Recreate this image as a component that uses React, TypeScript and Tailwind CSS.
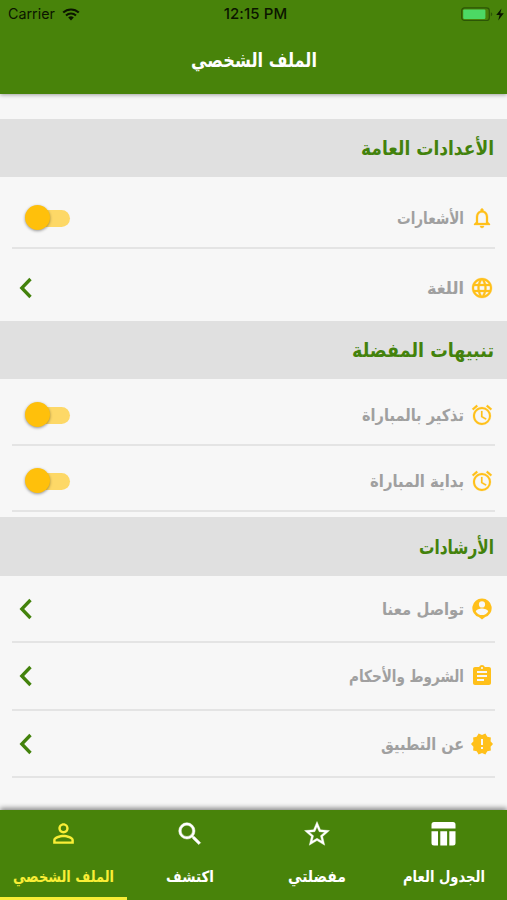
import type { ReactNode } from "react";
import {
  MdAlarm,
  MdAssignment,
  MdLanguage,
  MdNewReleases,
  MdNotificationsNone,
  MdPersonOutline,
  MdSearch,
  MdStarBorder,
} from "react-icons/md";

const WifiIcon = () => (
  <svg width="18" height="13" viewBox="0 0 18 13" fill="none">
    <path d="M1.2 4.6a11.2 11.2 0 0 1 15.6 0" stroke="#0b1500" strokeWidth="2.1" />
    <path d="M4 7.5a7.2 7.2 0 0 1 10 0" stroke="#0b1500" strokeWidth="2" />
    <path d="M9 12.4 6.2 9.6a4 4 0 0 1 5.6 0z" fill="#0b1500" />
  </svg>
);

const BatteryIcon = () => (
  <svg width="44" height="15" viewBox="0 0 44 15">
    <rect x=".7" y=".9" width="27.6" height="12.6" rx="2.8" fill="none" stroke="#2c5606" strokeWidth="1.2" />
    <rect x="2.2" y="2.4" width="22.2" height="9.6" rx="1.2" fill="#4cd964" />
    <path d="M29.8 5.2c2 .8 2 3.2 0 4z" fill="#2c5606" />
    <path d="M40.5 1.5 35.2 8h3.4l-1.4 5.5 5.6-7.200h-3.500z" fill="#0b1500" />
  </svg>
);

const PersonPinIcon = () => (
  <svg width="24" height="24" viewBox="0 0 24 24" fill="currentColor">
    <path
      fillRule="evenodd"
      d="M12 1.6a9.5 9.5 0 0 0-3.2 18.5L12 22.6l3.2-2.5A9.5 9.5 0 0 0 12 1.6zM12 4.3a3.1 3.1 0 1 1 0 6.2 3.1 3.1 0 0 1 0-6.2zM5.8 14.6c0-2.2 4.2-3.2 6.2-3.2s6.2 1 6.2 3.2a7.3 7.3 0 0 1-12.4 0z"
    />
  </svg>
);

const TableIcon = () => (
  <svg width="28" height="28" viewBox="0 0 28 28" fill="currentColor">
    <path d="M4 2h19a2.5 2.5 0 0 1 2.5 2.5V8.6h-24V4.5A2.5 2.5 0 0 1 4 2z" />
    <path d="M1.5 11.2h6.500V25.500H4A2.500 2.500 0 0 1 1.500 23zM10.300 11.200h6.800V25.500h-6.800zM19.300 11.200h6.200V23a2.500 2.500 0 0 1-2.500 2.500h-3.700z" />
  </svg>
);

const Toggle = () => (
  <div className="relative ml-[13px] h-[26px] w-[45px]">
    <div className="absolute left-1 top-[5px] h-[17px] w-[41px] rounded-full bg-[#fdd867]" />
    <div className="absolute left-0 top-0 h-[25px] w-[25px] rounded-full bg-[#ffc00b] shadow-[0_1px_3px_rgba(0,0,0,0.4)]" />
  </div>
);

const Chevron = () => (
  <svg className="ml-[7px]" width="13" height="22" viewBox="0 0 13 22" fill="none">
    <path d="M11.5 2 2.8 11l8.7 9" stroke="#43820c" strokeWidth="3.3" />
  </svg>
);

// Arabic label squeezed to the width it has in the app's own typeface
const Label = ({ text, width, className }: { text: string; width: number; className: string }) => (
  <svg className={`overflow-visible ${className}`} style={{ width }} height="40" direction="rtl">
    <text x={width} y="26" fill="currentColor" textLength={width} lengthAdjust="spacingAndGlyphs">
      {text}
    </text>
  </svg>
);

interface RowProps {
  icon: ReactNode;
  text: string;
  width: number;
  toggle?: boolean;
  className: string;
}

const Row = ({ icon, text, width, toggle, className }: RowProps) => (
  <div className={`mx-3 flex items-center justify-between border-[#e4e4e4] ${className}`}>
    <div className="flex items-center gap-1.5 pr-px">
      <span className="flex w-6 justify-center text-[24px] text-[#ffc01a] [&_[fill=none]]:stroke-none">{icon}</span>
      <Label text={text} width={width} className="text-[16.5px] font-bold text-[#a0a0a0]" />
    </div>
    {toggle ? <Toggle /> : <Chevron />}
  </div>
);

const SectionTitle = ({ text, width, className }: { text: string; width: number; className: string }) => (
  <div className={`flex items-center bg-[#e0e0e0] px-[13px] pt-0.5 text-[#43820c] ${className}`}>
    <Label text={text} width={width} className="text-[19.5px] font-bold" />
  </div>
);

const tabs = [
  { icon: <TableIcon />, text: "الجدول العام", width: 82 },
  { icon: <MdStarBorder size={30} className="stroke-current stroke-[0.3]" />, text: "مفضلتي", width: 58 },
  { icon: <MdSearch size={30} className="stroke-current stroke-[0.4]" />, text: "اكتشف", width: 48 },
  { icon: <MdPersonOutline size={31} />, text: "الملف الشخصي", width: 101, active: true },
];

export default function App() {
  return (
    <div
      dir="rtl"
      className="flex h-[900px] w-[507px] flex-col overflow-hidden bg-[#f7f7f7] font-['DejaVu_Sans',sans-serif]"
    >
      <header className="z-10 h-[94px] shrink-0 bg-[#48830a] shadow-[0_1px_4px_rgba(0,0,0,0.35)]">
        <div
          dir="ltr"
          className="grid h-7 grid-cols-3 items-center pl-2 pr-1 font-['Inter',sans-serif] text-[#0b1500]"
        >
          <div className="flex items-center gap-[7px]">
            <span className="text-[14.3px]">Carrier</span>
            <WifiIcon />
          </div>
          <span className="text-center text-[15px] font-medium tracking-[0.1px]">12:15 PM</span>
          <div className="-mr-0.5 flex justify-end">
            <BatteryIcon />
          </div>
        </div>
        <div className="flex h-[66px] items-center justify-center text-white">
          <Label text="الملف الشخصي" width={126} className="text-[19.5px] font-bold" />
        </div>
      </header>

      <main className="flex-1 pt-[25px]">
        <SectionTitle text="الأعدادات العامة" width={133} className="h-[58px]" />
        <Row
          icon={<MdNotificationsNone className="stroke-current stroke-[0.3]" />}
          text="الأشعارات"
          width={67}
          toggle
          className="h-[72px] border-b-2 pt-3"
        />
        <Row icon={<MdLanguage className="stroke-current stroke-[0.3]" />} text="اللغة" width={37} className="h-[72px] pt-1.5" />

        <SectionTitle text="تنبيهات المفضلة" width={142} className="h-[58px]" />
        <Row
          icon={<MdAlarm className="stroke-current stroke-[0.2]" />}
          text="تذكير بالمباراة"
          width={102}
          toggle
          className="h-[67px] border-b-2 pt-1.5"
        />
        <Row
          icon={<MdAlarm className="stroke-current stroke-[0.2]" />}
          text="بداية المباراة"
          width={94}
          toggle
          className="h-[66px] border-b-2 pt-1.5"
        />

        <SectionTitle text="الأرشادات" width={75} className="mt-[5px] h-[59px]" />
        <Row icon={<PersonPinIcon />} text="تواصل معنا" width={82} className="h-[67px] border-b-2" />
        <Row icon={<MdAssignment />} text="الشروط والأحكام" width={115} className="h-[68px] border-b-2" />
        <Row icon={<MdNewReleases />} text="عن التطبيق" width={83} className="h-[67px] border-b-2" />
      </main>

      <nav className="grid h-[90px] shrink-0 grid-cols-4 bg-[#48830a] shadow-[0_-2px_5px_rgba(0,0,0,0.45)]">
        {tabs.map((tab) => (
          <div
            key={tab.text}
            className={`flex flex-col items-center border-b-[3px] pt-2 ${
              tab.active ? "border-[#f9ee36] text-[#f9ee36]" : "border-transparent text-white"
            }`}
          >
            <div className="flex h-[31px] items-center [&_[fill=none]]:stroke-none">{tab.icon}</div>
            <Label text={tab.text} width={tab.width} className="mt-[7px] text-[15.5px] font-bold" />
          </div>
        ))}
      </nav>
    </div>
  );
}
